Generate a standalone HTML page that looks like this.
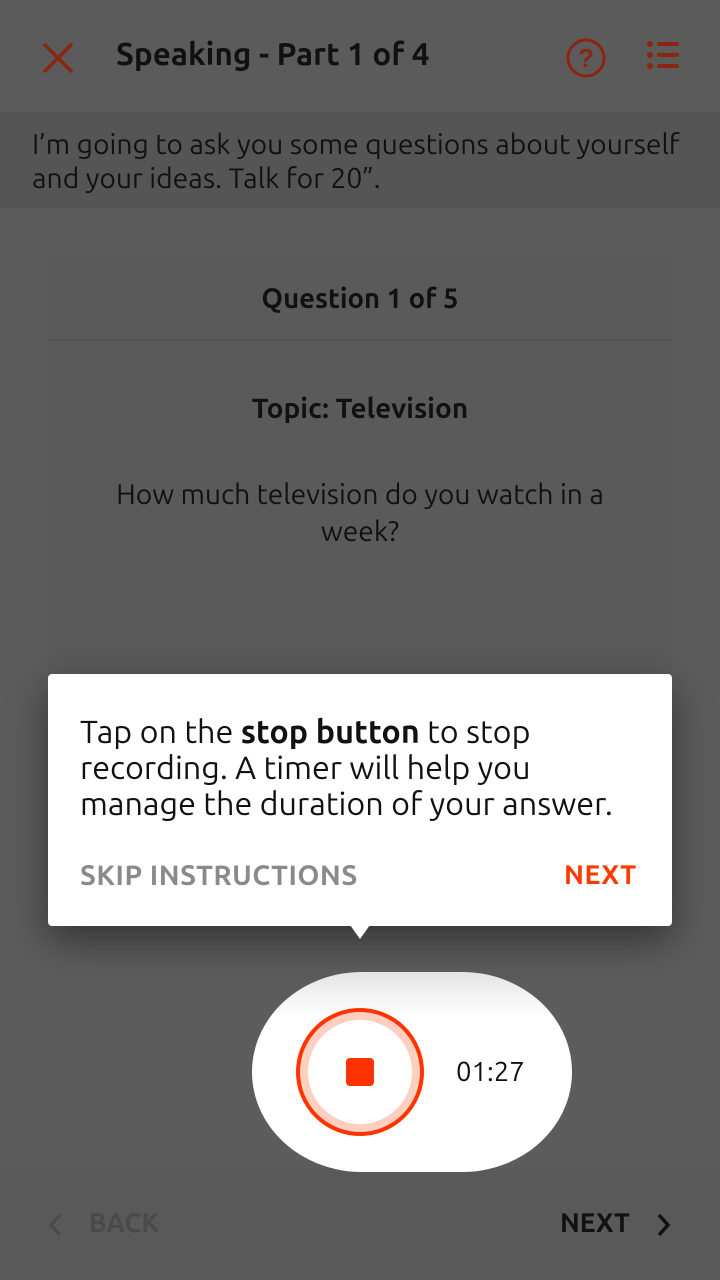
<!DOCTYPE html>
<html><head><meta charset="utf-8"><style>
*{margin:0;padding:0;box-sizing:border-box}
body{width:720px;height:1280px;background:#5c5c5c;font-family:"Ubuntu","Liberation Sans",sans-serif;position:relative;overflow:hidden;color:#111}
.abs{position:absolute}
</style></head><body>
<div class="abs" style="left:0;top:0;width:720px;height:112px;background:#5b5b5b"></div>
<svg class="abs" style="left:40px;top:40px" width="36" height="36" viewBox="0 0 36 36"><path d="M4 4L32 32M32 4L4 32" stroke="#8a2510" stroke-width="3.5"/></svg>
<div class="abs" style="left:116px;top:36px;font-size:31.5px;font-weight:700;color:#111">Speaking - Part 1 of 4</div>
<svg class="abs" style="left:564px;top:36px" width="44" height="44" viewBox="0 0 44 44"><circle cx="22" cy="22" r="18" fill="none" stroke="#8a2510" stroke-width="3"/><text x="22" y="31" text-anchor="middle" font-size="26" font-weight="bold" fill="#8a2510" font-family="Liberation Sans">?</text></svg>
<svg class="abs" style="left:646px;top:40px" width="36" height="32" viewBox="0 0 36 32"><g fill="#8a2510"><circle cx="4" cy="4" r="3"/><circle cx="4" cy="15" r="3"/><circle cx="4" cy="26" r="3"/><rect x="11" y="2" width="22" height="4" rx="2"/><rect x="11" y="13" width="22" height="4" rx="2"/><rect x="11" y="24" width="22" height="4" rx="2"/></g></svg>
<div class="abs" style="left:0;top:112px;width:720px;height:96px;background:#555"></div>
<div class="abs" style="left:32px;top:128px;width:670px;font-size:28.3px;line-height:34px;color:#111">I’m going to ask you some questions about yourself and your ideas. Talk for 20”.</div>
<div class="abs" style="left:48px;top:256px;width:624px;height:460px;background:#5a5a5a;border-radius:4px"></div>
<div class="abs" style="left:48px;top:339px;width:624px;height:2px;background:#545454"></div>
<div class="abs" style="left:48px;top:283px;width:624px;text-align:center;font-size:27.5px;font-weight:700">Question 1 of 5</div>
<div class="abs" style="left:48px;top:393px;width:624px;text-align:center;font-size:28px;font-weight:700">Topic: Television</div>
<div class="abs" style="left:100px;top:476px;width:520px;text-align:center;font-size:28.2px;line-height:37px">How much television do you watch in a week?</div>
<div class="abs" style="left:0;top:1168px;width:720px;height:112px;background:#595959"></div>
<svg class="abs" style="left:46px;top:1212px" width="20" height="26" viewBox="0 0 20 26"><path d="M14 3L5 13L14 23" fill="none" stroke="#4a4a4a" stroke-width="3"/></svg>
<div class="abs" style="left:89px;top:1208px;font-size:26.5px;font-weight:700;color:#4a4a4a">BACK</div>
<div class="abs" style="left:560px;top:1208px;font-size:26.5px;font-weight:700;color:#111">NEXT</div>
<svg class="abs" style="left:654px;top:1212px" width="20" height="26" viewBox="0 0 20 26"><path d="M5 3L14 13L5 23" fill="none" stroke="#111" stroke-width="3.5"/></svg>
<div class="abs" style="left:48px;top:674px;width:624px;height:252px;background:#fff;border-radius:4px;box-shadow:0 14px 40px rgba(0,0,0,0.45)"></div>
<div class="abs" style="left:350px;top:925px;width:0;height:0;border-left:10px solid transparent;border-right:10px solid transparent;border-top:14px solid #fff"></div>
<div class="abs" style="left:80px;top:714px;width:548px;font-size:32.3px;line-height:36px;color:#111">Tap on the <b>stop button</b> to stop recording. A timer will help you manage the duration of your answer.</div>
<div class="abs" style="left:80px;top:860px;font-size:28px;font-weight:700;color:#8a8a8a;letter-spacing:0.5px">SKIP INSTRUCTIONS</div>
<div class="abs" style="left:564px;top:860px;font-size:26.8px;font-weight:700;color:#ff3a00;letter-spacing:0.5px">NEXT</div>
<div class="abs" style="left:252px;top:972px;width:320px;height:200px;background:linear-gradient(#e4e4e4,#fff 45px);border-radius:110px/100px"></div>
<div class="abs" style="left:296px;top:1008px;width:128px;height:128px;border-radius:50%;border:4px solid #ff3300;background:#ffcfc0"></div>
<div class="abs" style="left:308px;top:1020px;width:104px;height:104px;border-radius:50%;background:#fff"></div>
<div class="abs" style="left:346px;top:1058px;width:28px;height:28px;border-radius:4px;background:#ff3300"></div>
<div class="abs" style="left:456px;top:1056px;font-size:27.5px;color:#111">01:27</div>
</body></html>
